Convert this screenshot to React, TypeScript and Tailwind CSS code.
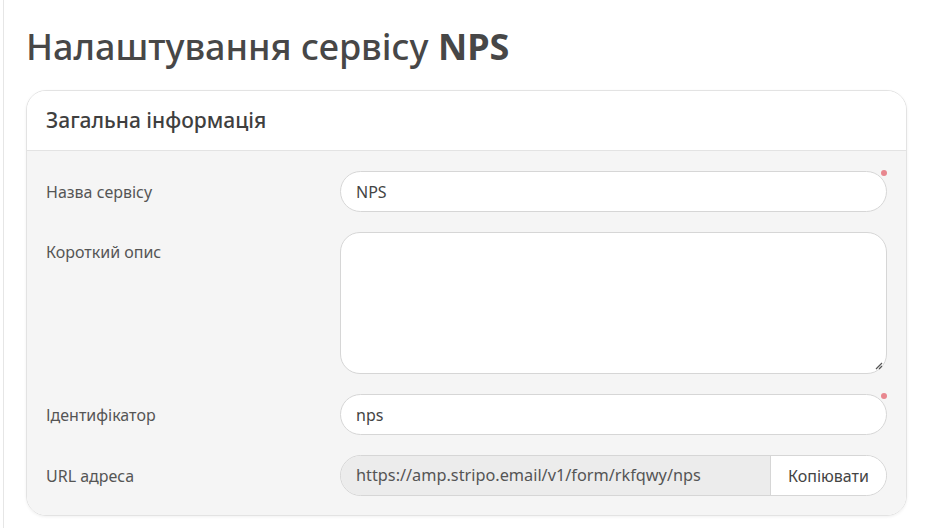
import React from "react";

const font = { fontFamily: '"Noto Sans", "Open Sans", sans-serif' };

function Dot() {
  return <span className="absolute right-0 top-[-1px] h-[6px] w-[6px] rounded-full bg-[#e8878f]" />;
}

export default function App() {
  return (
    <div className="h-[528px] w-[936px] overflow-hidden bg-white" style={font}>
      <div className="ml-[3px] h-full border-l border-[#e6e6e6] pl-[22px] pr-[29px]">
        <h1 className="pt-[22px] text-[36px] font-medium leading-[50px] text-[#474747]">
          Налаштування сервісу <span className="font-bold">NPS</span>
        </h1>
        <div className="mt-[18px] overflow-hidden rounded-[20px] border border-[#e3e3e3] shadow-[0_1px_3px_rgba(0,0,0,0.06)]">
          <div className="flex h-[60px] items-center border-b border-[#e3e3e3] bg-white px-[19px] text-[21px] font-medium text-[#3f3f3f]">
            Загальна інформація
          </div>
          <div className="flex flex-col gap-[20px] bg-[#f5f5f5] px-[19px] pb-[19px] pt-[20px] text-[16px] text-[#555]">
            <div className="flex items-center">
              <div className="w-[294px]">Назва сервісу</div>
              <div className="relative flex-1">
                <div className="flex h-[41px] items-center rounded-full border border-[#d6d6d6] bg-white px-[15px] text-[#444]">NPS</div>
                <Dot />
              </div>
            </div>
            <div className="flex items-start">
              <div className="w-[294px] pt-[8px]">Короткий опис</div>
              <div className="relative h-[142px] flex-1 rounded-[20px] border border-[#d6d6d6] bg-white">
                <svg className="absolute bottom-[3px] right-[3px]" width="10" height="10" viewBox="0 0 10 10">
                  <path d="M9 3 L3 9 M9 6 L6 9" stroke="#555" strokeWidth="1.2" />
                </svg>
              </div>
            </div>
            <div className="flex items-center">
              <div className="w-[294px]">Ідентифікатор</div>
              <div className="relative flex-1">
                <div className="flex h-[41px] items-center rounded-full border border-[#d6d6d6] bg-white px-[15px] text-[#444]">nps</div>
                <Dot />
              </div>
            </div>
            <div className="flex items-center">
              <div className="w-[294px]">URL адреса</div>
              <div className="flex h-[41px] flex-1 overflow-hidden rounded-full border border-[#d6d6d6]">
                <div className="flex flex-1 items-center bg-[#ececec] px-[15px] text-[16.3px] text-[#555]">https://amp.stripo.email/v1/form/rkfqwy/nps</div>
                <div className="flex w-[116px] items-center justify-center border-l border-[#d6d6d6] bg-white text-[#444]">Копіювати</div>
              </div>
            </div>
          </div>
        </div>
      </div>
    </div>
  );
}
